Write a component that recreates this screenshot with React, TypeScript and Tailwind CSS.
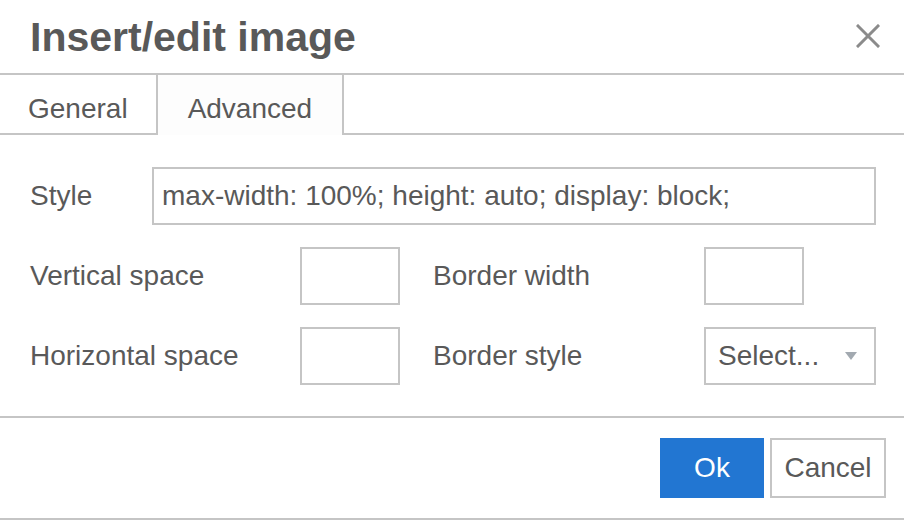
import { useState } from 'react';

function CloseIcon() {
  return (
    <svg width="24" height="24" viewBox="0 0 24 24" className="text-[#8b8b8b]">
      <path d="M2 2 L22 22 M22 2 L2 22" stroke="currentColor" strokeWidth="3" strokeLinecap="square" fill="none" />
    </svg>
  );
}

function TextBox({ className = '', value = '' }: { className?: string; value?: string }) {
  return (
    <input
      readOnly
      value={value}
      className={`h-[58px] border-2 border-[#c5c5c5] bg-white px-[8px] text-[28px] text-[#595959] outline-none ${className}`}
    />
  );
}

export default function App() {
  const [tab, setTab] = useState('Advanced');
  const tabs = ['General', 'Advanced'];

  return (
    <div className="w-[904px] h-[520px] bg-white font-['Liberation_Sans',Arial,sans-serif] text-[#595959] overflow-hidden">
      {/* Header */}
      <div className="h-[75px] flex items-center justify-between pl-[30px] pr-[24px] pt-[2px] border-b-2 border-[#c5c5c5]">
        <h1 className="text-[41px] font-bold leading-none">Insert/edit image</h1>
        <button className="w-[24px] h-[24px] -mt-[4px]">
          <CloseIcon />
        </button>
      </div>

      {/* Tabs */}
      <div className="h-[60px] flex border-b-2 border-[#c5c5c5]">
        {tabs.map(t => (
          <button
            key={t}
            onClick={() => setTab(t)}
            className={`pt-[20px] text-[28px] leading-none flex items-start ${
              tab === t
                ? 'px-[30px] h-[60px] -mb-[2px] bg-[#fdfdfd] border-x-2 border-[#c5c5c5]'
                : 'px-[28px] h-[58px]'
            }`}
          >
            {t}
          </button>
        ))}
      </div>

      {/* Body */}
      <div className="pl-[30px] pr-[28px] pt-[32px] pb-[31px] flex flex-col gap-[22px] text-[28px]">
        <div className="flex items-center">
          <label className="w-[122px]">Style</label>
          <TextBox className="flex-1" value="max-width: 100%; height: auto; display: block;" />
        </div>
        <div className="flex items-center">
          <label className="w-[270px]">Vertical space</label>
          <TextBox className="w-[100px]" />
          <label className="w-[271px] ml-[33px]">Border width</label>
          <TextBox className="w-[100px]" />
        </div>
        <div className="flex items-center">
          <label className="w-[270px]">Horizontal space</label>
          <TextBox className="w-[100px]" />
          <label className="w-[271px] ml-[33px]">Border style</label>
          <div className="relative w-[172px] h-[58px] border-2 border-[#c5c5c5] flex items-center pl-[12px]">
            <span>Select...</span>
            <span className="absolute right-[17px] top-[23px] w-0 h-0 border-l-[6px] border-r-[6px] border-t-[8px] border-l-transparent border-r-transparent border-t-[#a2a9b0]" />
          </div>
        </div>
      </div>

      {/* Footer */}
      <div className="border-y-2 border-[#c5c5c5] py-[20px] pr-[18px] flex justify-end gap-[6px]">
        <button className="w-[104px] h-[60px] bg-[#2276d2] text-white text-[28px]">Ok</button>
        <button className="w-[116px] h-[60px] border-2 border-[#c5c5c5] bg-white text-[28px]">Cancel</button>
      </div>
    </div>
  );
}
